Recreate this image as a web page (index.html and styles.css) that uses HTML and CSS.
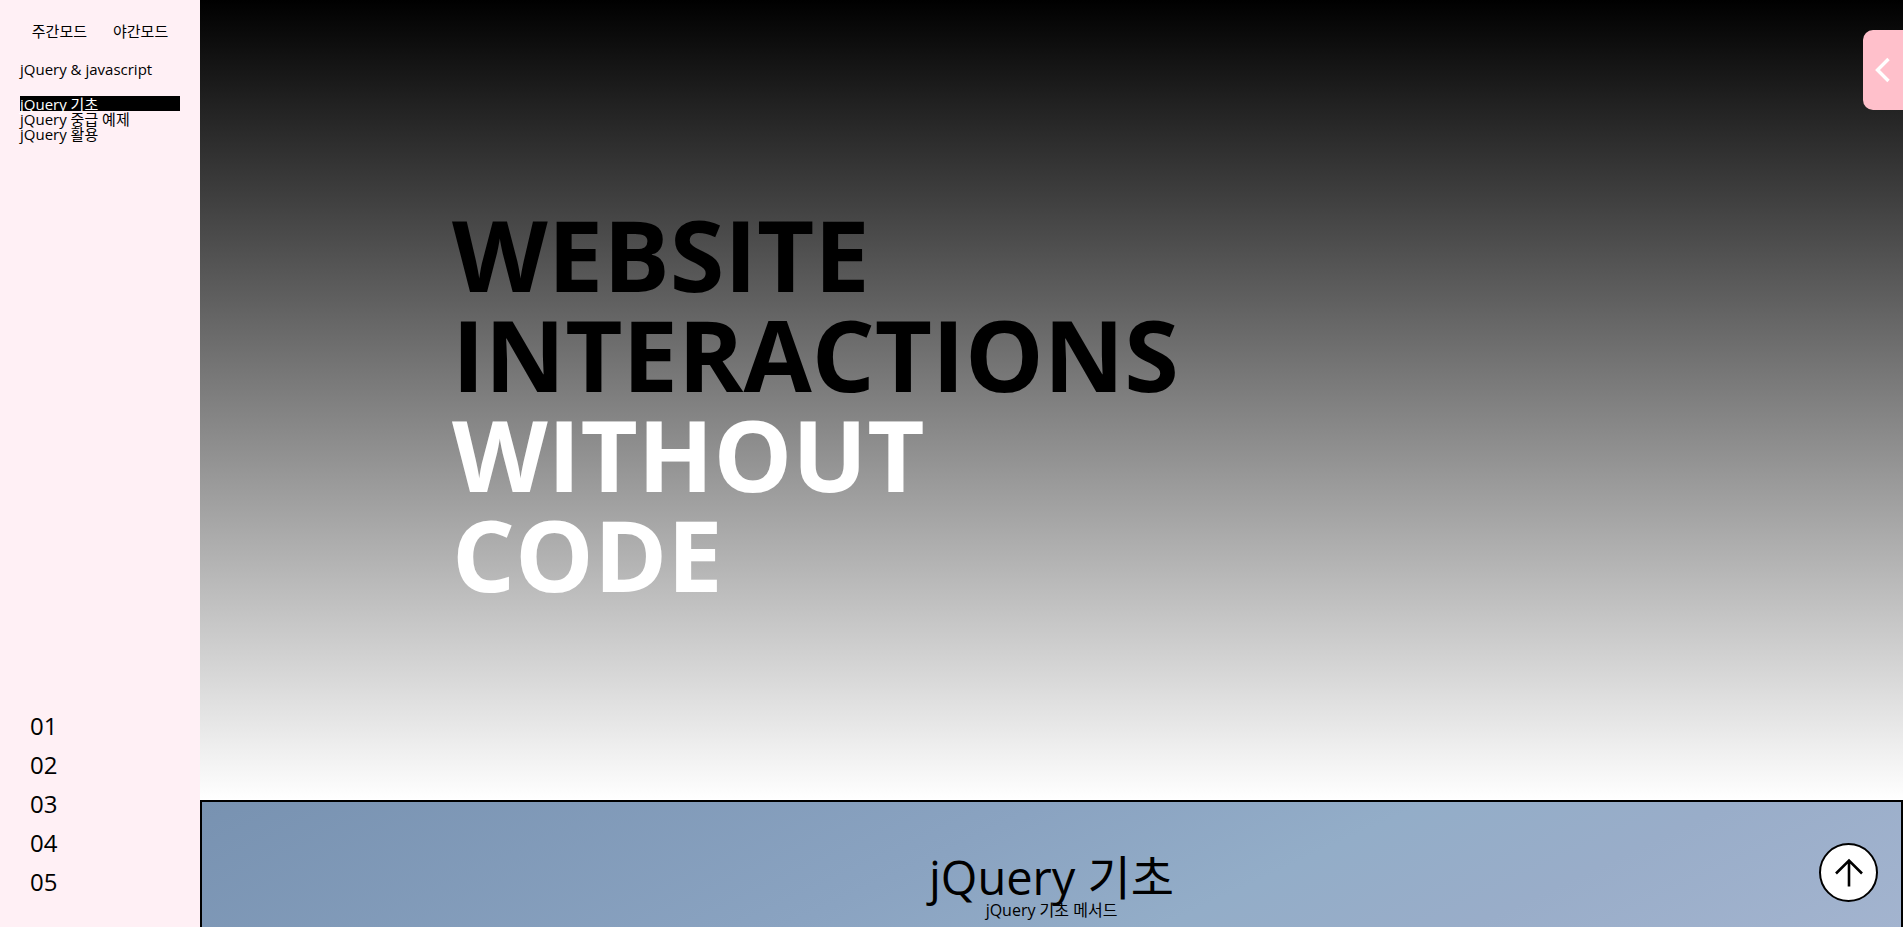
FILE: index.html
```
<!DOCTYPE html>
<html lang="ko">
<head>
<meta charset="utf-8">
<title>jQuery &amp; javascript</title>
<link rel="stylesheet" href="styles.css">
</head>
<body>
<aside class="sidebar">
  <div class="modes">
    <button type="button" class="mode">주간모드</button>
    <button type="button" class="mode">야간모드</button>
  </div>
  <h1 class="brand">jQuery &amp; javascript</h1>
  <ul class="menu">
    <li class="menu-item active"><a href="#basic">jQuery 기초</a></li>
    <li class="menu-item"><a href="#middle">jQuery 중급 예제</a></li>
    <li class="menu-item"><a href="#advanced">jQuery 활용</a></li>
  </ul>
  <nav class="pages">
    <a href="#p1">01</a>
    <a href="#p2">02</a>
    <a href="#p3">03</a>
    <a href="#p4">04</a>
    <a href="#p5">05</a>
  </nav>
</aside>
<main class="content">
  <section class="hero">
    <p class="slogan">WEBSITE<br>INTERACTIONS<br><span class="light">WITHOUT<br>CODE</span></p>
  </section>
  <section class="lesson" id="basic">
    <h2 class="lesson-title">jQuery 기초</h2>
    <p class="lesson-sub">jQuery 기초 메서드</p>
  </section>
</main>
<button type="button" class="drawer" aria-label="메뉴 열기">
  <svg width="16" height="26" viewBox="0 0 16 26" fill="none" stroke="#fff" stroke-width="3.4"><path d="M14.500 2 3.500 13l11 11"/></svg>
</button>
<button type="button" class="to-top" aria-label="맨 위로">
  <svg width="30" height="30" viewBox="0 0 30 30" fill="none" stroke="#000" stroke-width="2.6"><path d="M15 28.500V2.500M2 15.500 15 2.500l13 13"/></svg>
</button>
</body>
</html>
```
FILE: styles.css
```
* { margin: 0; padding: 0; box-sizing: border-box; }

html { scrollbar-width: none; }

body {
  font-family: "Open Sans", "Noto Sans CJK KR", sans-serif;
  font-size: 15px;
  line-height: 15px;
  color: #000;
}

a { color: inherit; text-decoration: none; }
ul { list-style: none; }
button { border: 0; background: none; font: inherit; color: inherit; cursor: pointer; }

.sidebar {
  position: fixed;
  top: 0;
  bottom: 0;
  left: 0;
  width: 200px;
  padding: 24px 20px 26px;
  background: #fff0f5;
  display: flex;
  flex-direction: column;
}

.modes { display: flex; justify-content: center; gap: 26px; }

.brand { margin-top: 20px; font-size: 15px; line-height: 20px; font-weight: 400; }
.menu { margin-top: 17px; }
.menu-item { height: 15px; line-height: 17px; }
.menu-item.active { background: #000; color: #fff; }

.pages {
  margin-top: auto;
  padding-left: 10px;
  display: flex;
  flex-direction: column;
  font-size: 24px;
  line-height: 39px;
}

.content { margin-left: 200px; }

.hero {
  height: 800px;
  padding: 204px 252px;
  background: linear-gradient(#000, #fff);
}

.slogan { font-size: 99px; line-height: 100px; font-weight: 700; }
.light { color: #fff; }

.lesson {
  min-height: 800px;
  padding-top: 50px;
  border: 2px solid #000;
  text-align: center;
  background: linear-gradient(155deg, #7892b1 0%, #8aa3c1 25%, #93adc8 36%, #99adc9 45%, #a3b4cf 58%, #b4c0d8 100%);
}

.lesson-title { font-size: 47px; line-height: 50px; font-weight: 400; }
.lesson-sub { font-size: 16px; line-height: 16px; }

.drawer {
  position: fixed;
  top: 30px;
  right: 0;
  width: 40px;
  height: 80px;
  padding-right: 2px;
  border-radius: 10px 0 0 10px;
  background: pink;
  display: flex;
  align-items: center;
  justify-content: center;
}

.to-top {
  position: fixed;
  right: 25px;
  bottom: 25px;
  width: 59px;
  height: 59px;
  border: 2px solid #000;
  border-radius: 50%;
  background: #fff;
  display: flex;
  align-items: center;
  justify-content: center;
}
```
